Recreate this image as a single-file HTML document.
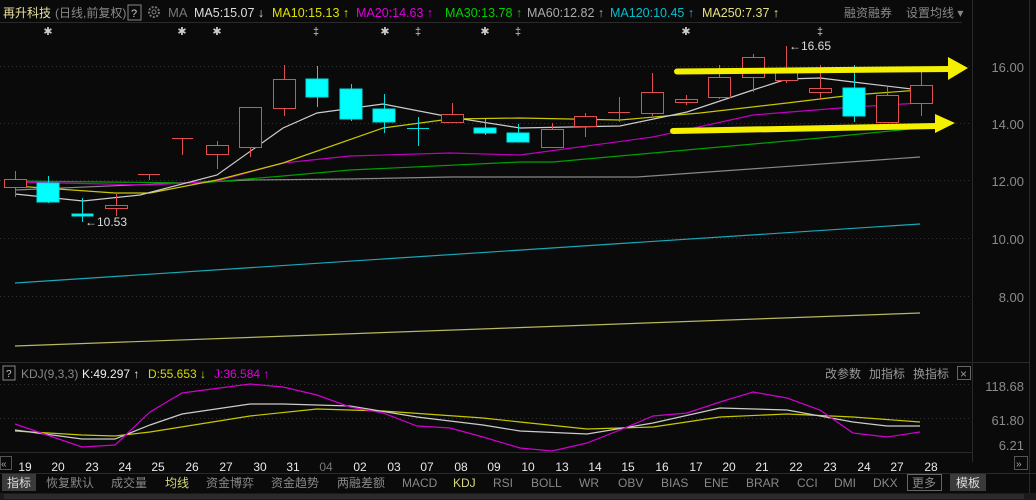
<!DOCTYPE html>
<html><head><meta charset="utf-8"><style>
body{margin:0;background:#0a0a0a;width:1036px;height:500px;overflow:hidden;font-family:"Liberation Sans","Noto Sans CJK SC",sans-serif;}
svg{position:absolute;left:0;top:0}
text{font-family:"Liberation Sans","Noto Sans CJK SC",sans-serif}
</style></head><body>
<svg width="1036" height="500" viewBox="0 0 1036 500">
<rect width="1036" height="500" fill="#0a0a0a"/>
<!-- header -->
<text x="3" y="17" font-size="12" fill="#e8e0a0">再升科技</text>
<text x="55" y="17" font-size="12" fill="#8a8a8a">(日线,前复权)</text>
<rect x="128" y="5" width="13" height="15" fill="none" stroke="#888" stroke-width="1"/>
<text x="131" y="17" font-size="11" fill="#ccc">?</text>
<circle cx="154" cy="12" r="5" fill="none" stroke="#777" stroke-width="2" stroke-dasharray="2 1.5"/>
<circle cx="154" cy="12" r="2" fill="none" stroke="#777"/>
<text x="168" y="17" font-size="13" fill="#777">MA</text>
<text x="194" y="17" font-size="12.5" fill="#ddd">MA5:15.07 ↓</text>
<text x="272" y="17" font-size="12.5" fill="#e0e000">MA10:15.13 ↑</text>
<text x="356" y="17" font-size="12.5" fill="#e000e0">MA20:14.63 ↑</text>
<text x="445" y="17" font-size="12.5" fill="#00d000">MA30:13.78 ↑</text>
<text x="527" y="17" font-size="12.5" fill="#aaa">MA60:12.82 ↑</text>
<text x="610" y="17" font-size="12.5" fill="#00c0d0">MA120:10.45 ↑</text>
<text x="702" y="17" font-size="12.5" fill="#e8e080">MA250:7.37 ↑</text>
<text x="844" y="17" font-size="12" fill="#888">融资融券</text>
<text x="906" y="17" font-size="12" fill="#888">设置均线 ▾</text>
<line x1="0" y1="22.5" x2="962" y2="22.5" stroke="#2a2a2a"/>
<line x1="972.5" y1="0" x2="972.5" y2="462" stroke="#2a2a2a"/>
<line x1="1029.5" y1="0" x2="1029.5" y2="500" stroke="#2a2a2a"/>
<!-- markers -->
<g font-size="11" fill="#ccc" text-anchor="middle">
<text x="48" y="35">✱</text><text x="182" y="35">✱</text><text x="217" y="35">✱</text><text x="316" y="35">‡</text><text x="385" y="35">✱</text><text x="418" y="35">‡</text><text x="485" y="35">✱</text><text x="518" y="35">‡</text><text x="686" y="35">✱</text><text x="820" y="35">‡</text>
</g>
<!-- grid -->
<g stroke="#333" stroke-dasharray="1 3">
<line x1="0" y1="66.5" x2="972" y2="66.5"/><line x1="0" y1="123.5" x2="972" y2="123.5"/><line x1="0" y1="180.5" x2="972" y2="180.5"/><line x1="0" y1="238.5" x2="972" y2="238.5"/><line x1="0" y1="296.5" x2="972" y2="296.5"/>
<line x1="0" y1="384.5" x2="972" y2="384.5"/><line x1="0" y1="418.5" x2="972" y2="418.5"/>
</g>
<line x1="0" y1="362.5" x2="1029" y2="362.5" stroke="#2a2a2a"/>
<line x1="0" y1="452.5" x2="972" y2="452.5" stroke="#2a2a2a"/>
<g font-size="13" fill="#8a8a8a" text-anchor="end">
<text x="1024" y="72">16.00</text><text x="1024" y="129">14.00</text><text x="1024" y="186">12.00</text><text x="1024" y="244">10.00</text><text x="1024" y="302">8.00</text>
<text x="1024" y="391">118.68</text><text x="1024" y="425">61.80</text><text x="1024" y="450">6.21</text>
</g>
<!-- MAs -->
<g fill="none" stroke-width="1.2">
<polyline stroke="#888" points="15,190 250,180 350,179 450,177 520,177 637,177 920,157"/>
<polyline stroke="#1aa8b8" points="15,283 920,224"/>
<polyline stroke="#b8b860" points="15,346 920,313"/>
<polyline stroke="#00a000" points="15,181 200,183 283,176 350,170 520,162 553,162 820,138 920,128"/>
<polyline stroke="#c000c0" points="15,182 150,185 217,181 283,163 350,156 450,153 520,155 653,137 753,115 853,107 920,103"/>
<polyline stroke="#c8c800" points="15,186 115,193 150,193 217,180 283,163 383,128 450,119 520,118 620,120 700,113 787,103 853,95 920,90"/>
<polyline stroke="#ccc" points="15,194 83,201 140,195 217,175 283,128 317,113 383,104 450,117 520,128 620,126 687,112 753,90 787,79 820,78 853,82 920,90"/>
</g>
<!-- candles -->
<g stroke="#e05050" fill="none" stroke-width="1">
<line x1="15.5" y1="171" x2="15.5" y2="197"/><rect x="4.5" y="179.5" width="22" height="8" fill="#0a0a0a"/>
<line x1="116.5" y1="194" x2="116.5" y2="216"/><rect x="105.5" y="205.5" width="22" height="3" fill="#0a0a0a"/>
<line x1="149.5" y1="174" x2="149.5" y2="180"/><line x1="138" y1="174.5" x2="160" y2="174.5"/>
<line x1="182.5" y1="138" x2="182.5" y2="155"/><line x1="172" y1="138.5" x2="193" y2="138.5"/>
<line x1="217.5" y1="141" x2="217.5" y2="169"/><rect x="206.5" y="145.5" width="22" height="9" fill="#0a0a0a"/>
<line x1="250.5" y1="107" x2="250.5" y2="157"/><rect x="239.5" y="107.5" width="22" height="40" fill="#0a0a0a"/>
<line x1="284.5" y1="65" x2="284.5" y2="116"/><rect x="273.5" y="79.5" width="22" height="29" fill="#0a0a0a"/>
<line x1="452.5" y1="103" x2="452.5" y2="123"/><rect x="441.5" y="114.5" width="22" height="8" fill="#0a0a0a"/>
<line x1="552.5" y1="123" x2="552.5" y2="147"/><rect x="541.5" y="129.5" width="22" height="18" fill="#0a0a0a"/>
<line x1="585.5" y1="113" x2="585.5" y2="137"/><rect x="574.5" y="116.5" width="22" height="10" fill="#0a0a0a"/>
<line x1="619.5" y1="97" x2="619.5" y2="122"/><line x1="608" y1="112.5" x2="630" y2="112.5"/>
<line x1="652.5" y1="73" x2="652.5" y2="116"/><rect x="641.5" y="92.5" width="22" height="21" fill="#0a0a0a"/>
<line x1="686.5" y1="95" x2="686.5" y2="105"/><rect x="675.5" y="99.5" width="22" height="3" fill="#0a0a0a"/>
<line x1="719.5" y1="65" x2="719.5" y2="99"/><rect x="708.5" y="77.5" width="22" height="20" fill="#0a0a0a"/>
<line x1="753.5" y1="54" x2="753.5" y2="92"/><rect x="742.5" y="57.5" width="22" height="20" fill="#0a0a0a"/>
<line x1="786.5" y1="46" x2="786.5" y2="83"/><rect x="775.5" y="72.5" width="22" height="8" fill="#0a0a0a"/>
<line x1="820.5" y1="65" x2="820.5" y2="99"/><rect x="809.5" y="88.5" width="22" height="4" fill="#0a0a0a"/>
<line x1="887.5" y1="87" x2="887.5" y2="122"/><rect x="876.5" y="95.5" width="22" height="27" fill="#0a0a0a"/>
<line x1="921.5" y1="72" x2="921.5" y2="116"/><rect x="910.5" y="85.5" width="22" height="18" fill="#0a0a0a"/>
</g>
<g stroke="#00e0e0" fill="#00ffff" stroke-width="1">
<line x1="48.5" y1="176" x2="48.5" y2="203"/><rect x="37" y="183" width="22" height="19"/>
<line x1="82.5" y1="198" x2="82.5" y2="222"/><rect x="72" y="214" width="21" height="2"/>
<line x1="317.5" y1="66" x2="317.5" y2="107"/><rect x="306" y="79" width="22" height="18"/>
<line x1="351.5" y1="84" x2="351.5" y2="121"/><rect x="340" y="89" width="22" height="30"/>
<line x1="384.5" y1="94" x2="384.5" y2="133"/><rect x="373" y="109" width="22" height="13"/>
<line x1="418.5" y1="117" x2="418.5" y2="146"/><line x1="407" y1="128.5" x2="429" y2="128.5"/>
<line x1="485.5" y1="119" x2="485.5" y2="135"/><rect x="474" y="128" width="22" height="5"/>
<line x1="518.5" y1="124" x2="518.5" y2="142"/><rect x="507" y="133" width="22" height="9"/>
<line x1="854.5" y1="65" x2="854.5" y2="122"/><rect x="843" y="88" width="22" height="28"/>
</g>
<text x="85" y="226" font-size="12" fill="#ddd">←10.53</text>
<text x="789" y="50" font-size="12" fill="#ddd">←16.65</text>
<!-- yellow arrows -->
<g fill="#f5f000" stroke="#f5f000">
<line x1="677" y1="71.5" x2="950" y2="69" stroke-width="6" stroke-linecap="round"/>
<polygon points="948,57 968,68 948,80" stroke="none"/>
<line x1="673" y1="131" x2="937" y2="126" stroke-width="6" stroke-linecap="round"/>
<polygon points="935,114 955,123 935,133" stroke="none"/>
</g>
<!-- KDJ -->
<rect x="3" y="366" width="12" height="14" fill="none" stroke="#888"/>
<text x="6" y="377" font-size="10" fill="#ccc">?</text>
<text x="21" y="378" font-size="12" fill="#888">KDJ(9,3,3)</text>
<text x="82" y="378" font-size="12" fill="#eee">K:49.297 ↑</text>
<text x="148" y="378" font-size="12" fill="#d8d800">D:55.653 ↓</text>
<text x="214" y="378" font-size="12" fill="#e000e0">J:36.584 ↑</text>
<text x="825" y="378" font-size="12" fill="#999">改参数</text>
<text x="869" y="378" font-size="12" fill="#999">加指标</text>
<text x="913" y="378" font-size="12" fill="#999">换指标</text>
<rect x="957.5" y="366.5" width="13" height="13" fill="none" stroke="#666"/>
<text x="960" y="378" font-size="12" fill="#999">×</text>
<g fill="none" stroke-width="1.2">
<polyline stroke="#c8c800" points="15,431 82,435 115,436 150,432 250,416 317,409 383,411 483,418 520,422 587,429 653,427 720,417 787,414 853,417 920,422"/>
<polyline stroke="#ccc" points="15,430 82,439 115,439 150,425 182,414 250,404 283,404 350,406 417,417 483,425 520,431 587,434 653,423 720,408 787,410 853,422 887,426 920,426"/>
<polyline stroke="#d000d0" points="15,424 82,447 115,445 150,412 182,393 250,384 283,387 317,395 350,407 383,413 417,426 450,428 483,437 520,448 552,451 587,443 620,430 653,416 687,413 720,402 753,392 787,398 820,410 853,433 887,437 920,432"/>
</g>
<!-- dates -->
<rect x="0.5" y="456.5" width="11" height="13" fill="none" stroke="#555"/>
<text x="1" y="467" font-size="10" fill="#aaa">«</text>
<rect x="1014.5" y="456.5" width="13" height="13" fill="none" stroke="#555"/>
<text x="1016" y="467" font-size="10" fill="#aaa">»</text>
<g font-size="12" fill="#e8e8e8" text-anchor="middle">
<text x="25" y="471">19</text><text x="58" y="471">20</text><text x="92" y="471">23</text><text x="125" y="471">24</text><text x="158" y="471">25</text><text x="192" y="471">26</text><text x="226" y="471">27</text><text x="260" y="471">30</text><text x="293" y="471">31</text><text x="326" y="471" fill="#777">04</text><text x="360" y="471">02</text><text x="394" y="471">03</text><text x="427" y="471">07</text><text x="461" y="471">08</text><text x="494" y="471">09</text><text x="528" y="471">10</text><text x="562" y="471">13</text><text x="595" y="471">14</text><text x="628" y="471">15</text><text x="662" y="471">16</text><text x="696" y="471">17</text><text x="729" y="471">20</text><text x="762" y="471">21</text><text x="796" y="471">22</text><text x="830" y="471">23</text><text x="864" y="471">24</text><text x="897" y="471">27</text><text x="931" y="471">28</text>
</g>
<line x1="0" y1="473.5" x2="1036" y2="473.5" stroke="#2a2a2a"/>
<!-- tabs -->
<rect x="2" y="474" width="34" height="17" fill="#3a3a3a"/>
<rect x="950" y="474" width="36" height="17" fill="#3a3a3a"/>
<rect x="907.5" y="474.5" width="34" height="16" fill="none" stroke="#666"/>
<g font-size="12" fill="#888">
<text x="7" y="487" fill="#ddd">指标</text><text x="46" y="487">恢复默认</text><text x="111" y="487">成交量</text><text x="165" y="487" fill="#d8d880">均线</text><text x="206" y="487">资金博弈</text><text x="271" y="487">资金趋势</text><text x="337" y="487">两融差额</text><text x="402" y="487">MACD</text><text x="453" y="487" fill="#d8d880">KDJ</text><text x="493" y="487">RSI</text><text x="531" y="487">BOLL</text><text x="579" y="487">WR</text><text x="618" y="487">OBV</text><text x="661" y="487">BIAS</text><text x="704" y="487">ENE</text><text x="746" y="487">BRAR</text><text x="797" y="487">CCI</text><text x="834" y="487">DMI</text><text x="873" y="487">DKX</text><text x="912" y="487">更多</text><text x="956" y="487" fill="#ddd">模板</text>
</g>
<rect x="0" y="493" width="1036" height="7" fill="#1a1a1a"/>
<rect x="4" y="494" width="1020" height="5" fill="#2a2a2a"/>
</svg>
</body></html>
